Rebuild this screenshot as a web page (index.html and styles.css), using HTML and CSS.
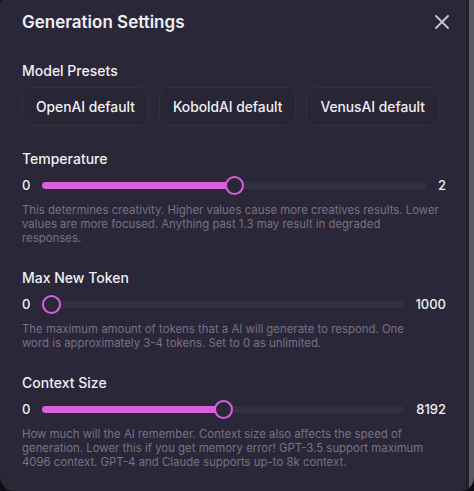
FILE: index.html
```html
<!doctype html>
<html>
<head>
  <meta charset="utf-8">
  <title>Generation Settings</title>
  <link rel="stylesheet" href="styles.css">
</head>
<body>
  <div class="modal">
    <div class="modal-body">
      <div class="modal-head">
        <h1>Generation Settings</h1>
        <button class="close" aria-label="Close">
          <svg width="14" height="14" viewBox="0 0 14 14"><path d="M1 1L13 13M13 1L1 13" stroke="currentColor" stroke-width="1.8" stroke-linecap="round"/></svg>
        </button>
      </div>

      <section class="group">
        <h2>Model Presets</h2>
        <div class="presets">
          <button class="preset">OpenAI default</button>
          <button class="preset">KoboldAI default</button>
          <button class="preset">VenusAI default</button>
        </div>
      </section>

      <section class="group">
        <h2>Temperature</h2>
        <div class="slider">
          <span class="num">0</span>
          <div class="track"><div class="fill" style="width: calc(9.5px + (100% - 19px) * 0.5)"><span class="thumb"></span></div></div>
          <span class="num">2</span>
        </div>
        <p class="desc">This determines creativity. Higher values cause more creatives results. Lower values are more focused. Anything past 1.3 may result in degraded responses.</p>
      </section>

      <section class="group">
        <h2>Max New Token</h2>
        <div class="slider">
          <span class="num">0</span>
          <div class="track"><div class="fill" style="width: calc(9.5px + (100% - 19px) * 0)"><span class="thumb"></span></div></div>
          <span class="num">1000</span>
        </div>
        <p class="desc">The maximum amount of tokens that a AI will generate to respond. One word&nbsp;is approximately 3-4 tokens. Set to 0 as unlimited.</p>
      </section>

      <section class="group">
        <h2>Context Size</h2>
        <div class="slider">
          <span class="num">0</span>
          <div class="track"><div class="fill" style="width: calc(9.5px + (100% - 19px) * 0.5)"><span class="thumb"></span></div></div>
          <span class="num">8192</span>
        </div>
        <p class="desc">How much will the AI remember. Context size also affects the speed of generation. Lower this if you get memory error! GPT-3.5 support maximum 4096 context. GPT-4 and Claude supports up-to 8k context.</p>
      </section>
    </div>
    <div class="scrollbar"></div>
  </div>
</body>
</html>
```

FILE: styles.css
```css
* {
  margin: 0; padding: 0;
  box-sizing: border-box;
}
html, body {
  width: 100%;
  height: 100%;
  overflow: hidden;
}
body {
  background: #0e0d14;
  font-family: Inter, "Noto Sans", sans-serif;
  color: #f1eff6;
}
.modal {
  display: flex;
  height: 100%;
  background: #2a2738;
  border-radius: 3px 0 14px 14px;
  overflow: hidden;
}
.modal-body {
  flex: 1;
  padding: 8px 20px 0 22px;
}
.scrollbar {
  width: 8px;
  border-left: 3px solid #232130;
  background: #5b5966;
}
.modal-head {
  display: flex;
  align-items: center;
  justify-content: space-between;
  height: 28px;
  margin-bottom: 25px;
}
.modal-head h1 {
  font-size: 17px;
  font-weight: 600;
}
.close {
  background: none;
  border: none;
  color: #c9c6d2;
  width: 28px;
  height: 28px;
  display: flex;
  align-items: center;
  justify-content: center;
  margin-right: -10px;
}
.group {
  margin-bottom: 23px;
}
.group h2 {
  font-size: 14px;
  font-weight: 500;
  line-height: 20px;
  margin-bottom: 6px;
}
.presets {
  display: flex;
  gap: 10px;
}
.preset {
  flex: none;
  white-space: nowrap;
  height: 39px;
  padding: 0 13px;
  border: 1px solid #332f44;
  border-radius: 10px;
  background: #282535;
  color: #f1eff6;
  font-family: inherit;
  font-size: 13.8px;
  font-weight: 500;
}
.slider {
  display: flex;
  align-items: center;
  gap: 12px;
  height: 20px;
  margin-bottom: 8px;
}
.num {
  font-size: 13px;
  font-weight: 500;
}
.track {
  flex: 1;
  height: 7px;
  border-radius: 4px;
  background: #332f43;
}
.fill {
  position: relative;
  height: 100%;
  border-radius: 4px;
  background: #d95fdb;
}
.thumb {
  position: absolute;
  right: -9.5px;
  top: 50%;
  width: 19px;
  height: 19px;
  margin-top: -9.5px;
  border: 2px solid #d95fdb;
  border-radius: 50%;
  background: #2a2738;
}
.desc {
  max-width: 418px;
  font-size: 11.4px;
  line-height: 14px;
  color: #767384;
}
```
